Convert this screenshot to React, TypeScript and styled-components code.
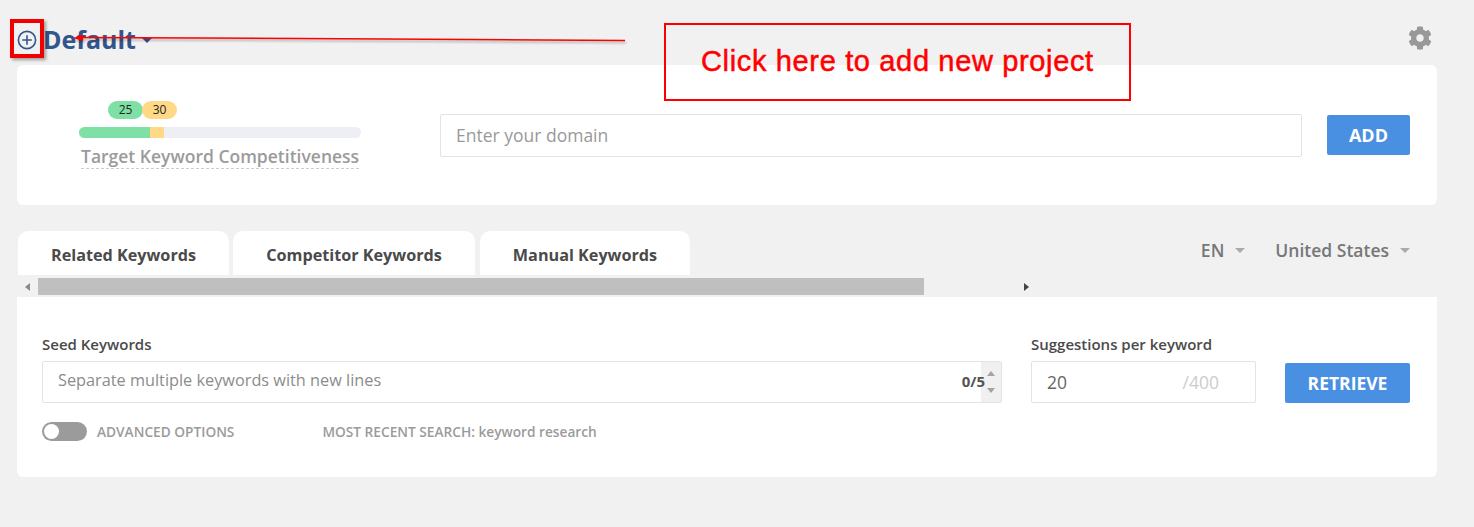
import React, { FC } from 'react';
import styled, { createGlobalStyle } from 'styled-components';
import { FaCog } from 'react-icons/fa';

const GlobalStyle = createGlobalStyle`
  html, body {
    margin: 0;
    padding: 0;
    background: #f1f1f1;
    font-family: 'Open Sans', sans-serif;
    overflow: hidden;
  }
`;

const Page = styled.div`
  position: relative;
  width: 1474px;
  height: 527px;
  padding: 0 37px 0 17px;
  box-sizing: border-box;
`;

const Header = styled.div`
  height: 65px;
  display: flex;
  align-items: center;
  justify-content: space-between;
  padding-top: 14px;
  box-sizing: border-box;
`;

const ProjectTitle = styled.div`
  display: flex;
  align-items: center;
  margin-top: -2px;
  color: #34558b;
  font-size: 25px;
  font-weight: 700;
  line-height: 36px;
`;

const PlusIcon = styled.svg`
  width: 20px;
  height: 20px;
  margin: 2px 6px 0 0;
  color: #34558b;
`;

const Caret = styled.span<{ $color: string; $size: number }>`
  display: inline-block;
  width: 0;
  height: 0;
  border-left: ${p => p.$size}px solid transparent;
  border-right: ${p => p.$size}px solid transparent;
  border-top: ${p => p.$size}px solid ${p => p.$color};
`;

const TitleCaret = styled(Caret)`
  margin: 4px 0 0 6px;
`;

const Settings = styled.div`
  display: flex;
  margin: -4px 5px 0 0;
  color: #999;
  font-size: 24px;
`;

const TopCard = styled.div`
  height: 140px;
  background: #fff;
  border-radius: 6px;
  display: flex;
  align-items: flex-start;
  padding: 36px 27px 0 62px;
  box-sizing: border-box;
`;

const Competitiveness = styled.div`
  width: 282px;
  margin-right: 79px;
`;

const Badges = styled.div`
  display: flex;
  padding-left: 29px;
  height: 18px;
`;

const Badge = styled.span<{ $bg: string }>`
  width: 35px;
  height: 18px;
  margin-right: -1px;
  border-radius: 9px;
  background: ${p => p.$bg};
  color: #222;
  font-size: 12px;
  line-height: 18px;
  text-align: center;
`;

const Meter = styled.div`
  display: flex;
  height: 11px;
  margin-top: 8px;
  border-radius: 6px;
  background: #edeff4;
  overflow: hidden;
`;

const MeterPart = styled.div<{ $bg: string; $w: number }>`
  width: ${p => p.$w}px;
  background: ${p => p.$bg};
`;

const MeterLabel = styled.div`
  margin: 7px 2px 0;
  padding-bottom: 1px;
  border-bottom: 1px dashed #ccc;
  color: #9b9b9b;
  font-size: 17.5px;
  font-weight: 600;
  line-height: 22px;
  text-align: center;
  white-space: nowrap;
`;

const FieldBox = styled.div<{ $w: number; $h: number }>`
  width: ${p => p.$w}px;
  height: ${p => p.$h}px;
  flex: none;
  display: flex;
  align-items: center;
  background: #fff;
  border: 1px solid #e3e3e3;
  border-radius: 2px;
  box-sizing: border-box;
  position: relative;
`;

const DomainField = styled(FieldBox)`
  margin-top: 13px;
  padding: 0 0 2px 15px;
  color: #999;
  font-size: 17.5px;
`;

const ActionButton = styled.button<{ $w: number; $size: number }>`
  width: ${p => p.$w}px;
  height: 40px;
  flex: none;
  border: none;
  border-radius: 2px;
  padding: 0;
  background: #4a90e2;
  color: #fff;
  font-family: inherit;
  font-size: ${p => p.$size}px;
  font-weight: 700;
`;

const AddButton = styled(ActionButton)`
  margin: 14px 0 0 25px;
`;

const TabRow = styled.div`
  display: flex;
  align-items: flex-end;
  justify-content: space-between;
  margin-top: 26px;
  height: 44px;
`;

const Tabs = styled.div`
  display: flex;
  gap: 4px;
  margin-left: 1px;
`;

const Tab = styled.div<{ $w: number }>`
  width: ${p => p.$w}px;
  height: 44px;
  padding-top: 2px;
  box-sizing: border-box;
  background: #fff;
  border-radius: 10px 10px 0 0;
  color: #4a4a4a;
  font-size: 16.2px;
  font-weight: 700;
  line-height: 44px;
  text-align: center;
  &:last-child {
    margin-left: 1px;
  }
`;

const Locale = styled.div`
  display: flex;
  align-self: flex-start;
  gap: 30px;
  margin: 7px 27px 0 0;
  color: #777;
  font-size: 17.5px;
  font-weight: 600;
  line-height: 24px;
`;

const LocaleItem = styled.span`
  display: flex;
  align-items: center;
  gap: 11px;
`;

const Scrollbar = styled.div`
  display: flex;
  align-items: center;
  width: 1019px;
  height: 17px;
  margin-top: 3px;
  margin-bottom: 2px;
`;

const ScrollLeft = styled.div`
  width: 21px;
  display: flex;
  justify-content: center;
`;

const ScrollThumb = styled.div`
  width: 886px;
  height: 17px;
  background: #bfbfbf;
`;

const ScrollArrow = styled.span<{ $left?: boolean; $color: string }>`
  width: 0;
  height: 0;
  border-top: 4px solid transparent;
  border-bottom: 4px solid transparent;
  ${p => (p.$left ? `border-right: 5px solid ${p.$color};` : `border-left: 5px solid ${p.$color};`)}
`;

const ScrollRight = styled.div`
  flex: 1;
  display: flex;
  justify-content: flex-end;
  padding-right: 7px;
`;

const Panel = styled.div`
  height: 180px;
  background: #fff;
  border-radius: 0 0 6px 6px;
  padding: 37px 27px 0 25px;
  box-sizing: border-box;
`;

const FormRow = styled.div`
  display: flex;
  align-items: flex-end;
`;

const Field = styled.div`
  display: flex;
  flex-direction: column;
`;

const SuggestField = styled(Field)`
  margin-left: 29px;
`;

const Label = styled.label`
  color: #4a4a4a;
  font-size: 15px;
  font-weight: 600;
  line-height: 20px;
  margin-bottom: 7px;
`;

const SeedBox = styled(FieldBox)`
  padding: 0 0 4px 15px;
  color: #8c8c8c;
  font-size: 16.3px;
`;

const Counter = styled.span`
  position: absolute;
  right: 16px;
  top: 9px;
  color: #555;
  font-size: 15px;
  font-weight: 700;
  line-height: 20px;
`;

const Spinner = styled.div`
  position: absolute;
  right: 0;
  top: 0;
  bottom: 0;
  width: 20px;
  background: #f0f0f0;
  display: flex;
  flex-direction: column;
  align-items: center;
  justify-content: space-between;
  padding: 9px 0;
  box-sizing: border-box;
`;

const SpinUp = styled.span`
  width: 0;
  height: 0;
  border-left: 4px solid transparent;
  border-right: 4px solid transparent;
  border-bottom: 5px solid #a3a3a3;
`;

const SpinDown = styled.span`
  width: 0;
  height: 0;
  border-left: 4px solid transparent;
  border-right: 4px solid transparent;
  border-top: 5px solid #a3a3a3;
`;

const SuggestBox = styled(FieldBox)`
  padding: 0 36px 0 15px;
  justify-content: space-between;
  font-size: 17.5px;
  color: #666;
`;

const Limit = styled.span`
  color: #ccc;
`;

const RetrieveButton = styled(ActionButton)`
  margin: 0 0 0 29px;
`;

const OptionsRow = styled.div`
  display: flex;
  align-items: center;
  margin-top: 19px;
  color: #9b9b9b;
  font-size: 13.7px;
  font-weight: 600;
  line-height: 19px;
`;

const Toggle = styled.div`
  width: 45px;
  height: 19px;
  margin-right: 10px;
  padding: 2px;
  box-sizing: border-box;
  border-radius: 10px;
  background: #9b9b9b;
`;

const Knob = styled.div`
  width: 15px;
  height: 15px;
  border-radius: 50%;
  background: #fff;
`;

const RecentSearch = styled.span`
  margin-left: 88px;
`;

/* annotation layer pasted over the screenshot */
const MarkerBox = styled.div`
  position: absolute;
  left: 10px;
  top: 19px;
  width: 34px;
  height: 39px;
  box-sizing: border-box;
  border: 4px solid #f00000;
  box-shadow: 2px 2px 3px rgba(0, 0, 0, 0.35);
`;

const ArrowLine = styled.svg`
  position: absolute;
  left: 70px;
  top: 30px;
  width: 560px;
  height: 18px;
  overflow: visible;
  filter: drop-shadow(1px 2px 1px rgba(0, 0, 0, 0.3));
`;

const Callout = styled.div`
  position: absolute;
  left: 664px;
  top: 23px;
  width: 467px;
  height: 78px;
  box-sizing: border-box;
  border: 2px solid #f00;
  padding-left: 35px;
  color: #f00;
  font-family: 'Liberation Sans', Arial, sans-serif;
  font-size: 29px;
  letter-spacing: 0.65px;
  -webkit-text-stroke: 0.5px #f00;
  line-height: 72px;
  white-space: nowrap;
`;

const TABS = [
  { label: 'Related Keywords', w: 211 },
  { label: 'Competitor Keywords', w: 242 },
  { label: 'Manual Keywords', w: 210 },
];

const App: FC = () => {
  return (
    <Page>
      <GlobalStyle />
      <Header>
        <ProjectTitle>
          <PlusIcon viewBox="0 0 20 20" fill="none" stroke="currentColor" strokeWidth="1.6">
            <circle cx="10" cy="10" r="8.6" />
            <path d="M10 5.2v9.6M5.2 10h9.6" />
          </PlusIcon>
          Default
          <TitleCaret $color="#34558b" $size={5.5} />
        </ProjectTitle>
        <Settings>
          <FaCog />
        </Settings>
      </Header>

      <TopCard>
        <Competitiveness>
          <Badges>
            <Badge $bg="#7fe0a5">25</Badge>
            <Badge $bg="#ffd986">30</Badge>
          </Badges>
          <Meter>
            <MeterPart $bg="#7fe0a5" $w={71} />
            <MeterPart $bg="#ffd986" $w={14} />
          </Meter>
          <MeterLabel>Target Keyword Competitiveness</MeterLabel>
        </Competitiveness>
        <DomainField $w={862} $h={43}>Enter your domain</DomainField>
        <AddButton $w={83} $size={18}>ADD</AddButton>
      </TopCard>

      <TabRow>
        <Tabs>
          {TABS.map(tab => (
            <Tab key={tab.label} $w={tab.w}>{tab.label}</Tab>
          ))}
        </Tabs>
        <Locale>
          <LocaleItem>EN <Caret $color="#aaa" $size={5} /></LocaleItem>
          <LocaleItem>United States <Caret $color="#aaa" $size={5} /></LocaleItem>
        </Locale>
      </TabRow>

      <Scrollbar>
        <ScrollLeft><ScrollArrow $left $color="#8a8a8a" /></ScrollLeft>
        <ScrollThumb />
        <ScrollRight><ScrollArrow $color="#444" /></ScrollRight>
      </Scrollbar>

      <Panel>
        <FormRow>
          <Field>
            <Label>Seed Keywords</Label>
            <SeedBox $w={960} $h={42}>
              Separate multiple keywords with new lines
              <Spinner><SpinUp /><SpinDown /></Spinner>
              <Counter>0/5</Counter>
            </SeedBox>
          </Field>
          <SuggestField>
            <Label>Suggestions per keyword</Label>
            <SuggestBox $w={225} $h={42}>
              20
              <Limit>/400</Limit>
            </SuggestBox>
          </SuggestField>
          <RetrieveButton $w={125} $size={17.5}>RETRIEVE</RetrieveButton>
        </FormRow>
        <OptionsRow>
          <Toggle><Knob /></Toggle>
          ADVANCED OPTIONS
          <RecentSearch>MOST RECENT SEARCH: keyword research</RecentSearch>
        </OptionsRow>
      </Panel>

      <MarkerBox />
      <ArrowLine viewBox="0 0 560 18">
        <path d="M8 7.5 L230 8.5 L555 10.5" stroke="#f00" strokeWidth="1.6" fill="none" />
        <path d="M3 8 L13 4.5 L13 11 Z" fill="#f00" />
      </ArrowLine>
      <Callout>Click here to add new project</Callout>
    </Page>
  );
};

export default App;
